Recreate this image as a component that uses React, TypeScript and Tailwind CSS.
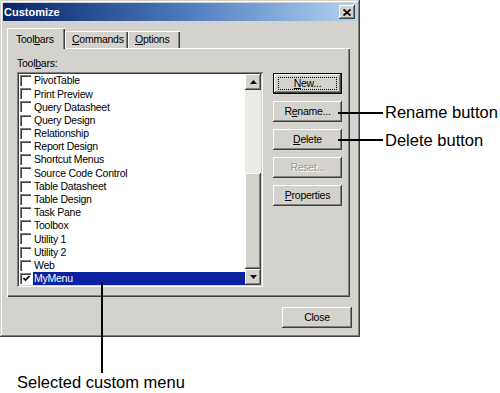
import React from 'react'

const raised =
    'shadow-[inset_-1px_-1px_#404040,inset_1px_1px_#ffffff,inset_-2px_-2px_#808080]'
const sunken =
    'shadow-[inset_1px_1px_#808080,inset_-1px_-1px_#ffffff,inset_2px_2px_#404040,inset_-2px_-2px_#d4d2cc]'

const toolbars = [
    'PivotTable',
    'Print Preview',
    'Query Datasheet',
    'Query Design',
    'Relationship',
    'Report Design',
    'Shortcut Menus',
    'Source Code Control',
    'Table Datasheet',
    'Table Design',
    'Task Pane',
    'Toolbox',
    'Utility 1',
    'Utility 2',
    'Web',
]

const CheckBox = ({ checked }: { checked?: boolean }) => (
    <span className="w-[11px] h-[11px] bg-white shrink-0 flex items-center justify-center shadow-[inset_1px_1px_#808080,inset_2px_2px_#404040,inset_-1px_-1px_#ffffff]">
        {checked && (
            <svg width="7" height="7" viewBox="0 0 7 7" className="ml-[1px] mt-[1px]">
                <path d="M0.5 3 L2.5 5 L6.5 1" stroke="#000" strokeWidth="1.6" fill="none" />
            </svg>
        )}
    </span>
)

const Arrow = ({ up }: { up?: boolean }) => (
    <div className={`w-[16px] h-[16px] bg-[#d4d2cc] flex items-center justify-center ${raised}`}>
        <svg width="7" height="4" viewBox="0 0 7 4">
            <path d={up ? 'M0 4 L3.5 0 L7 4 Z' : 'M0 0 L3.5 4 L7 0 Z'} fill="#000" />
        </svg>
    </div>
)

const DlgButton = ({
    children,
    disabled,
    isDefault,
    className = '',
}: {
    children: React.ReactNode
    disabled?: boolean
    isDefault?: boolean
    className?: string
}) => (
    <div
        className={`w-[69px] h-[21px] bg-[#d4d2cc] flex items-center justify-center ${
            isDefault
                ? 'border border-black shadow-[inset_-1px_-1px_#404040,inset_1px_1px_#ffffff,inset_-2px_-2px_#808080]'
                : raised
        } ${className}`}
    >
        {isDefault ? (
            <span className="border border-dotted border-black w-[59px] h-[13px] flex items-center justify-center leading-none">
                {children}
            </span>
        ) : (
            <span
                className={
                    disabled
                        ? 'text-[#9a9a96] [text-shadow:1px_1px_0_#ffffff]'
                        : 'text-black'
                }
            >
                {children}
            </span>
        )}
    </div>
)

export default function App() {
    return (
        <div className="relative w-[500px] h-[393px] bg-white overflow-hidden font-['Liberation_Sans',Arial,sans-serif]">
            {/* dialog */}
            <div className="w-[360px] h-[337px] bg-[#d4d2cc] p-[3px] flex flex-col text-[10.5px] tracking-[-0.25px] text-black shadow-[inset_-1px_-1px_#404040,inset_1px_1px_#d4d2cc,inset_-2px_-2px_#808080,inset_2px_2px_#ffffff]">
                <div className="h-[18px] flex items-center justify-between pl-[1px] pr-[2px] bg-gradient-to-r from-[#0a246a] via-[#4a78bc] to-[#b2d4f2]">
                    <span className="text-white font-bold text-[11px] tracking-normal leading-none">
                        Customize
                    </span>
                    <div className={`w-[16px] h-[14px] bg-[#d4d2cc] flex items-center justify-center ${raised}`}>
                        <svg width="8" height="7" viewBox="0 0 8 7">
                            <path d="M0.5 0.5 L7.5 6.5 M7.5 0.5 L0.5 6.5" stroke="#000" strokeWidth="1.8" />
                        </svg>
                    </div>
                </div>

                {/* tabs */}
                <div className="flex items-end h-[21px] mt-[6px] ml-[4px] relative z-10">
                    <div className="h-[21px] w-[58px] pl-[9px] pt-[6px] bg-[#d4d2cc] shadow-[inset_1px_1px_#ffffff,inset_-1px_0_#404040,inset_-2px_0_#808080] mb-[-1px] leading-none">
                        Tool<u>b</u>ars
                    </div>
                    <div className="h-[17px] w-[63px] pl-[7px] pt-[3px] shadow-[inset_1px_1px_#ffffff,inset_-1px_0_#404040,inset_-2px_0_#808080] leading-none">
                        <u>C</u>ommands
                    </div>
                    <div className="h-[17px] w-[52px] pl-[7px] pt-[3px] shadow-[inset_1px_1px_#ffffff,inset_-1px_0_#404040,inset_-2px_0_#808080] leading-none">
                        <u>O</u>ptions
                    </div>
                </div>

                {/* panel */}
                <div className="ml-[4px] w-[343px] h-[249px] shadow-[inset_1px_1px_#ffffff,inset_-1px_-1px_#404040,inset_-2px_-2px_#808080] pl-[10px] pt-[10px]">
                    <div className="leading-none h-[14px]">
                        Tool<u>b</u>ars:
                    </div>
                    <div className="flex gap-[10px]">
                        <div className={`w-[246px] h-[215px] bg-white p-[2px] flex ${sunken}`}>
                            <div className="flex-1 flex flex-col">
                                {toolbars.map((t) => (
                                    <div key={t} className="h-[13.2px] flex items-center pl-[1px] gap-[3px]">
                                        <CheckBox />
                                        <span className="leading-none">{t}</span>
                                    </div>
                                ))}
                                <div className="h-[13.2px] flex items-center pl-[1px] gap-[2px]">
                                    <CheckBox checked />
                                    <span className="flex-1 h-full bg-[#0c22a0] text-white leading-none flex items-center pl-[1px]">
                                        MyMenu
                                    </span>
                                </div>
                            </div>
                            <div className="w-[16px] flex flex-col">
                                <Arrow up />
                                <div className="flex-1 bg-[#eceae6]" />
                                <div className={`h-[96px] bg-[#d4d2cc] ${raised}`} />
                                <Arrow />
                            </div>
                        </div>
                        <div className="flex flex-col gap-[7px] pt-[1px]">
                            <DlgButton isDefault>
                                <u>N</u>ew...
                            </DlgButton>
                            <DlgButton>
                                R<u>e</u>name...
                            </DlgButton>
                            <DlgButton>
                                <u>D</u>elete
                            </DlgButton>
                            <DlgButton disabled>Reset...</DlgButton>
                            <DlgButton>
                                <u>P</u>roperties
                            </DlgButton>
                        </div>
                    </div>
                </div>

                <div className="flex justify-end pr-[5px] mt-[10px]">
                    <DlgButton className="w-[70px]">Close</DlgButton>
                </div>
            </div>

            {/* callouts */}
            <div className="absolute left-[338px] top-[112px] w-[45px] h-[1.5px] bg-black" />
            <div className="absolute left-[338px] top-[139px] w-[45px] h-[1.5px] bg-black" />
            <div className="absolute left-[385px] top-[104px] text-[16.5px] leading-none">
                Rename button
            </div>
            <div className="absolute left-[385px] top-[132px] text-[16.5px] leading-none">
                Delete button
            </div>
            <div className="absolute left-[101px] top-[282px] w-[1.5px] h-[91px] bg-black" />
            <div className="absolute left-[17px] top-[374px] text-[16.5px] leading-none">
                Selected custom menu
            </div>
        </div>
    )
}
